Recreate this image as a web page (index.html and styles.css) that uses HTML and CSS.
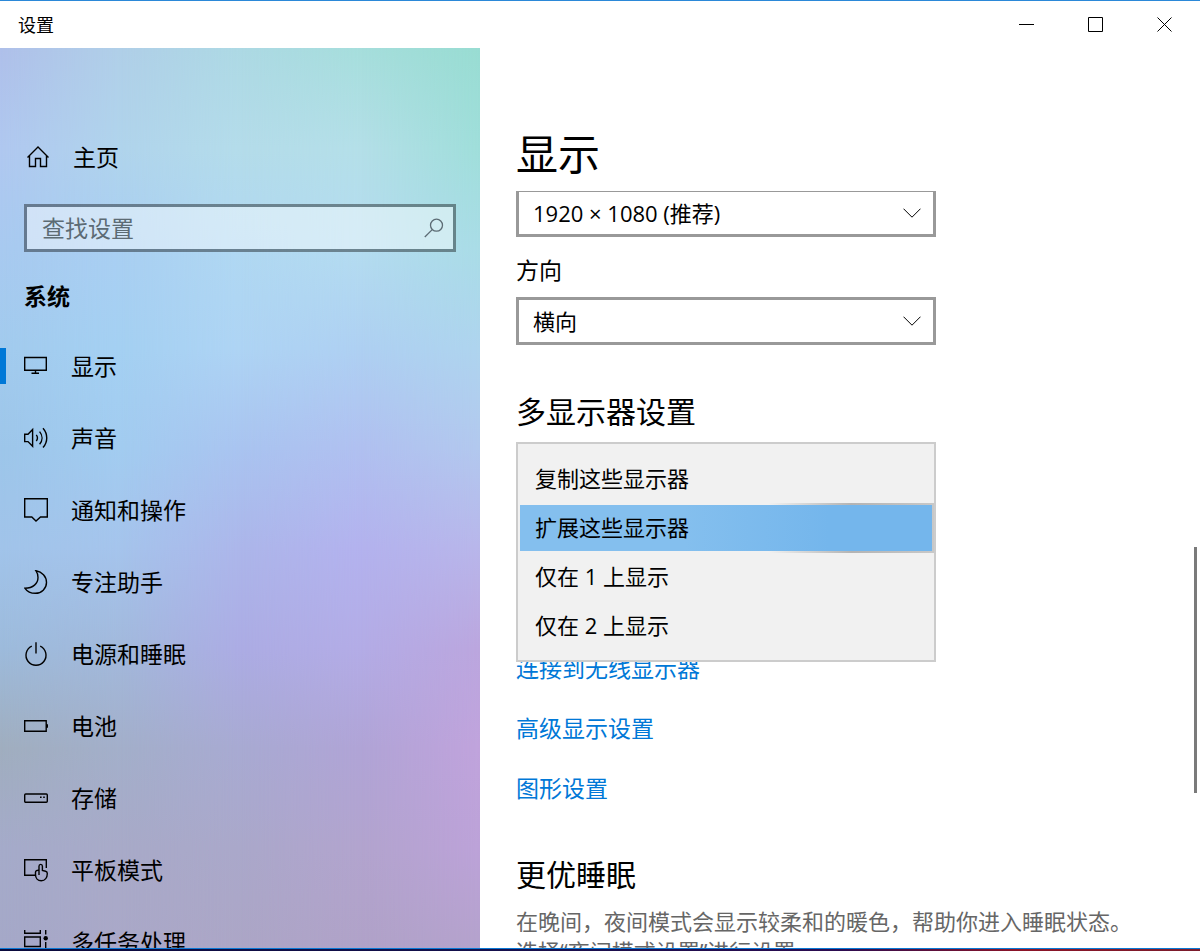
FILE: index.html
```html
<!DOCTYPE html>
<html lang="zh-CN">
<head>
<meta charset="utf-8">
<meta name="viewport" content="width=device-width, initial-scale=1">
<title>设置</title>
<link rel="stylesheet" href="styles.css">
</head>
<body>
<div class="window">
  <header class="titlebar">
    <span class="titlebar-text">设置</span>
    <div class="window-controls">
      <button type="button" class="window-button" aria-label="最小化"><svg width="16" height="16" viewBox="0 0 16 16"><path d="M0 7.5h15"/></svg></button>
      <button type="button" class="window-button" aria-label="最大化"><svg width="16" height="16" viewBox="0 0 16 16"><path d="M.5.5h14v14H.5z"/></svg></button>
      <button type="button" class="window-button" aria-label="关闭"><svg width="16" height="16" viewBox="0 0 16 16"><path d="M.5.5l14 14M14.5.5l-14 14"/></svg></button>
    </div>
  </header>

  <div class="body">
    <aside class="sidebar">
      <div class="wallpaper" aria-hidden="true">
        <div class="wash wash-1"></div>
        <div class="wash wash-2"></div>
        <div class="wash wash-3"></div>
        <div class="wash wash-4"></div>
        <div class="wash wash-5"></div>
      </div>
      <a class="home" href="#"><svg class="icon" viewBox="0 0 24 24"><path d="M1.5 12.5 12 2l10.5 10.5M3.5 10.8v10.7h6v-8h5v8h6V10.8"/></svg><span>主页</span></a>
      <div class="search">
        <input class="search-input" type="text" placeholder="查找设置" aria-label="查找设置">
        <svg class="search-icon" viewBox="0 0 20 20"><circle cx="12.5" cy="7.2" r="6"/><path d="M8.2 11.6.8 19"/></svg>
      </div>
      <h2 class="group-title">系统</h2>
      <nav class="nav">
        <a class="nav-item active" href="#"><svg class="icon" viewBox="0 0 24 24"><path d="M.7 3.5h21.6v12.8H.7zM11.5 16.5V19M7.5 19.2H15"/></svg><span>显示</span></a>
        <a class="nav-item" href="#"><svg class="icon" viewBox="0 0 24 24"><path d="M.7 8.3H4l4.6-4.8v16.8L4 15.6H.7zM12.3 8.8c1.5 2 1.5 4.200 0 6.200M15.600 5.600c3.200 3.800 3.200 8.800 0 12.600M19 2.300c5 5.700 5 13.500 0 19.200"/></svg><span>声音</span></a>
        <a class="nav-item" href="#"><svg class="icon" viewBox="0 0 24 24"><path d="M.7.7h22.600v18.300h-6.800L12 23l-4.200-4H.7z"/></svg><span>通知和操作</span></a>
        <a class="nav-item" href="#"><svg class="icon" viewBox="0 0 24 24"><path d="M12 .8c6 1 10.500 5.700 10.500 11.700s-5 10.800-11 10.800c-4.500 0-8.500-2-10.500-5 8 0 13-4.800 13-10.800 0-2.500-.5-4.700-2-6.700z"/></svg><span>专注助手</span></a>
        <a class="nav-item" href="#"><svg class="icon" viewBox="0 0 24 24"><path d="M12 .3v11.200M7.800 4.200a10 10 0 1 0 8.400 0"/></svg><span>电源和睡眠</span></a>
        <a class="nav-item" href="#"><svg class="icon" viewBox="0 0 24 24"><path d="M.7 6.700h21.500v10.600H.7z"/><path class="solid" d="M22 10.300h2v3.400h-2z"/></svg><span>电池</span></a>
        <a class="nav-item" href="#"><svg class="icon" viewBox="0 0 24 24"><rect x=".7" y="8" width="22.600" height="8.200" rx="1"/><path class="solid" d="M16 10.500h1.600v1.600H16zM19.200 10.500h1.600v1.600h-1.600z"/></svg><span>存储</span></a>
        <a class="nav-item" href="#"><svg class="icon" viewBox="0 0 24 24"><path d="M11 17.300H.7V1.700h21.600v8.300M15 17V8.200c0-2.400 3.400-2.400 3.400 0v4.300l3.200.8c1.200.3 1.700 1 1.700 2.200 0 4-2.200 7.300-6 7.300-3.600 0-5.800-2.600-5.800-6.200v-2.400c0-1.300 1.400-2.200 3.500-1.900"/></svg><span>平板模式</span></a>
        <a class="nav-item" href="#"><svg class="icon" viewBox="0 0 24 24"><path d="M.7 0v3.300h15.600V0M.7 7h15.600v9.500H.7zM.7 24v-3.500h15.600V24M21.700 0v4.500M21.700 12v12"/><circle class="solid" cx="21.700" cy="8.300" r="2.200"/></svg><span>多任务处理</span></a>
      </nav>
    </aside>

    <main class="content">
      <h1 class="page-title">显示</h1>
      <div class="scroll-area">
        <div class="select-box clipped">
          <select class="select" aria-label="分辨率"><option>1920 × 1080 (推荐)</option></select>
          <svg class="chevron" viewBox="0 0 18 10"><path d="M.5.7 9 9.200 17.500.7"/></svg>
        </div>
        <label class="field-label" for="orientation">方向</label>
        <div class="select-box">
          <select class="select" id="orientation"><option>横向</option></select>
          <svg class="chevron" viewBox="0 0 18 10"><path d="M.5.7 9 9.200 17.500.7"/></svg>
        </div>

        <h2 class="section-title">多显示器设置</h2>
        <div class="menu-anchor">
          <div class="menu" role="listbox" aria-label="多显示器设置">
            <button type="button" class="menu-item" role="option" aria-selected="false">复制这些显示器</button>
            <button type="button" class="menu-item selected" role="option" aria-selected="true">扩展这些显示器</button>
            <button type="button" class="menu-item" role="option" aria-selected="false">仅在 1 上显示</button>
            <button type="button" class="menu-item" role="option" aria-selected="false">仅在 2 上显示</button>
          </div>
        </div>
        <div class="links">
          <a href="#">连接到无线显示器</a>
          <a href="#">高级显示设置</a>
          <a href="#">图形设置</a>
        </div>

        <h2 class="section-title sleep-title">更优睡眠</h2>
        <p class="description">在晚间，夜间模式会显示较柔和的暖色，帮助你进入睡眠状态。<br>选择“夜间模式设置”进行设置。</p>
        <div class="scroll-thumb"></div>
      </div>
    </main>
  </div>
  <div class="desktop-edge"></div>
</div>
</body>
</html>
```
FILE: styles.css
```css
* { box-sizing: border-box; }

body {
  margin: 0;
  font-family: "Open Sans", "Noto Sans CJK SC", sans-serif;
  font-size: 23px;
  line-height: 32px;
  color: #000;
  background: #fff;
}

h1, h2, p { margin: 0; font-weight: 400; }
a { color: inherit; text-decoration: none; }
button, input, select { font: inherit; color: inherit; margin: 0; }
svg { display: block; flex: none; fill: none; stroke: currentColor; }

.window {
  display: flex;
  flex-direction: column;
  height: 100vh;
  overflow: hidden;
  border-top: 1px solid #2b88d8;
}

.titlebar {
  display: flex;
  flex: none;
  align-items: center;
  justify-content: space-between;
  height: 47px;
  padding: 0 1px 0 18px;
}
.titlebar-text { font-size: 18px; }
.window-controls { display: flex; height: 100%; }
.window-button {
  display: flex;
  align-items: center;
  justify-content: center;
  width: 69px;
  padding: 0;
  border: 0;
  background: none;
}

.body { display: flex; flex: 1; min-height: 0; }

/* Sidebar */
.sidebar {
  position: relative;
  isolation: isolate;
  flex: none;
  width: 40%;
  padding-top: 85px;
  overflow: hidden;
}

/* Vertical colour washes, each fading in from the left over the previous one */
.wallpaper { position: absolute; inset: 0; z-index: -1; }
.wash { position: absolute; inset: 0; }
.wash-1 { background: linear-gradient(#afc0ea, #b0c8f0, #a8caf0, #a2cbee, #9dc6ea, #a1c4ea, #9dbbdc, #a0aebf, #a5abca, #a5a8c8); }
.wash-2 {
  background: linear-gradient(#b0cfe8, #b0d4ec, #a9cff2, #a4d0f2, #a2ccf0, #a5c4ec, #a2b9dc, #a3afca, #a8aac8, #aaa8c8);
  mask-image: linear-gradient(90deg, transparent, #000 25%);
}
.wash-3 {
  background: linear-gradient(#add9e4, #b4dcea, #b0d8f2, #aed4f4, #a9c4f0, #acb6ea, #acace4, #a8aad2, #aaa8ca, #aca6c6);
  mask-image: linear-gradient(90deg, transparent 25%, #000 50%);
}
.wash-4 {
  background: linear-gradient(#a6dedc, #b4dfe8, #b4dcf0, #aed0f2, #b0c0f0, #b3b2ee, #b3ace6, #b0a4d6, #b2a4ce, #b0a2c8);
  mask-image: linear-gradient(90deg, transparent 50%, #000 75%);
}
.wash-5 {
  background: linear-gradient(#98dcd2, #9fdeda, #a9dce6, #aed4ee, #b2c8ee, #b8b6ea, #bba6de, #c0a3dc, #bca2d8, #b4a2cc);
  mask-image: linear-gradient(90deg, transparent 75%, #000);
}

.icon { width: 24px; height: 24px; stroke-width: 1.4; }
.solid { fill: currentColor; stroke: none; }

.home {
  display: flex;
  align-items: center;
  gap: 23px;
  height: 48px;
  padding-left: 26px;
}

.search { position: relative; margin: 23px 24px 0; color: #5c6b74; }
.search-input {
  display: block;
  width: 100%;
  height: 48px;
  padding: 0 48px 0 15px;
  border: 3px solid rgba(0, 0, 0, .4);
  border-radius: 0;
  background: rgba(255, 255, 255, .45);
  background-clip: padding-box;
}
.search-input::placeholder { color: #5c6b74; opacity: 1; }
.search-icon {
  position: absolute;
  top: 14px;
  right: 12px;
  width: 20px;
  height: 20px;
  stroke-width: 1.3;
}

.group-title {
  margin: 28px 24px 18px;
  font-size: 23px;
  font-weight: 700;
}

.nav-item {
  position: relative;
  display: flex;
  align-items: center;
  gap: 23px;
  height: 72px;
  padding-left: 24px;
}
.nav-item.active::before {
  content: "";
  position: absolute;
  top: 18px;
  bottom: 18px;
  left: 0;
  width: 6px;
  background: #0078d7;
}

/* Content */
.content {
  display: flex;
  flex: 1;
  flex-direction: column;
  min-width: 0;
  padding-top: 78px;
}
.page-title {
  flex: none;
  padding: 0 36px;
  margin-bottom: 9px;
  font-size: 42px;
  line-height: 56px;
}
.scroll-area {
  position: relative;
  flex: 1;
  min-height: 0;
  padding: 0 36px;
  overflow: hidden;
}

.select-box { position: relative; max-width: 420px; }
.select {
  display: block;
  width: 100%;
  height: 48px;
  padding: 0 48px 0 14px;
  border: 3px solid #999;
  border-radius: 0;
  appearance: none;
  background: #fff;
  font-size: 22px;
}
.clipped .select { height: 46px; border-top-width: 1px; }
.chevron {
  position: absolute;
  top: 19px;
  right: 15px;
  width: 18px;
  height: 10px;
  pointer-events: none;
}
.clipped .chevron { top: 17px; }

.field-label { display: block; margin: 17px 0 11px; }

.section-title {
  margin: 47px 0 10px;
  font-size: 30px;
  line-height: 40px;
}

.menu-anchor { position: relative; max-width: 420px; height: 48px; }
.menu {
  position: absolute;
  top: 0;
  right: 0;
  left: 0;
  z-index: 1;
  display: flex;
  flex-direction: column;
  gap: 3px;
  padding: 12px 2px 11px;
  border: 2px solid #ccc;
  background: #f1f1f1;
  isolation: isolate;
}
.menu-item {
  position: relative;
  height: 46px;
  padding: 0 15px 2px;
  border: 0;
  background: none;
  font-size: 22px;
  text-align: left;
}
.menu-item.selected { background: linear-gradient(90deg, #84bfee 40%, #74b6ec 75%); }
.menu-item.selected::before {
  content: "";
  position: absolute;
  inset: -2px -2px -2px 0;
  z-index: -1;
  background: linear-gradient(90deg, transparent 60%, #b4b4b4 80%, #c8c8c8);
}

.links {
  display: flex;
  flex-direction: column;
  align-items: flex-start;
  gap: 28px;
  margin-top: 162px;
  color: #0078d7;
}

.sleep-title { margin: 51px 0 11px; }
.description {
  font-size: 22px;
  line-height: 30px;
  color: #666;
}

.scroll-thumb {
  position: absolute;
  top: 47%;
  right: 3px;
  width: 3px;
  height: 246px;
  background: #7a7a7a;
}

.desktop-edge {
  flex: none;
  height: 3px;
  border-top: 1px solid #0a78d4;
  background: linear-gradient(90deg, #0a0a3c, #14104c 40%, #2c0c50 70%, #8c1428 85%, #7a1c2c);
}
```
